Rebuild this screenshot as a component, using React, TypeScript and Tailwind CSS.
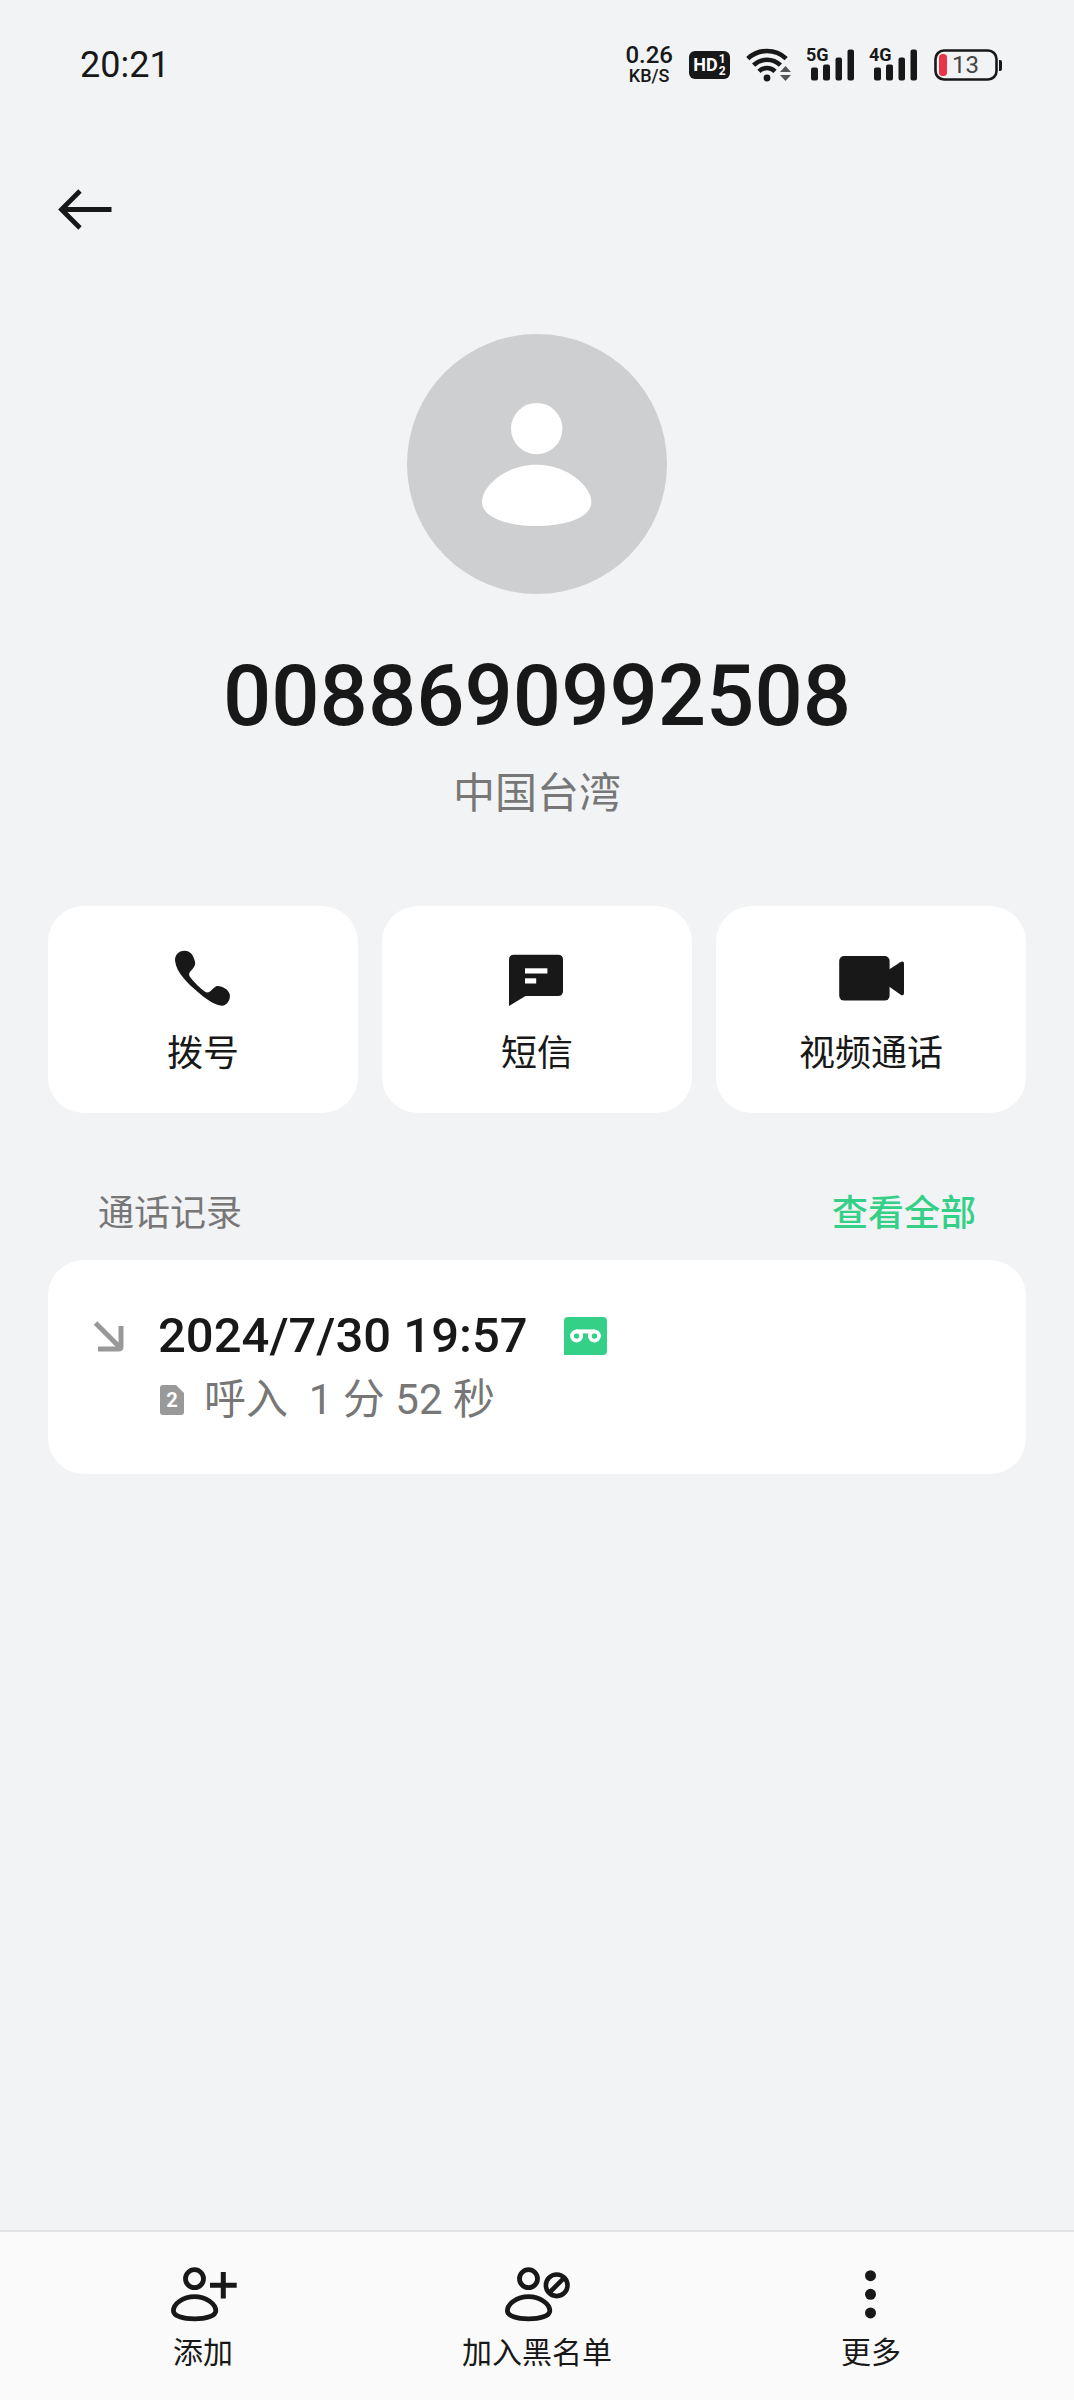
import type { ReactNode } from "react";

const PHONE_NUMBER = "0088690992508";

// Status bar icons

function HdIcon() {
  return (
    <div className="flex h-7 w-[41px] items-center justify-center gap-px rounded-md bg-[#181818] font-bold text-white">
      <span className="text-lg leading-7">HD</span>
      <span className="flex flex-col text-[12px] leading-[12px]">
        <span>1</span>
        <span>2</span>
      </span>
    </div>
  );
}

function WifiIcon() {
  return (
    <svg width="46" height="36" viewBox="0 0 46 36" fill="none" aria-hidden="true">
      <g stroke="#181818" strokeWidth="4.6">
        <path d="M1.8 11.6A28 28 0 0 1 40.2 11.6" />
        <path d="M7.6 18.2A19.2 19.2 0 0 1 34.4 18.2" />
        <path d="M13 24.4A11.2 11.2 0 0 1 29 24.4" />
      </g>
      <circle cx="21" cy="31" r="3.4" fill="#181818" />
      <path d="M34 25L39.5 19L45 25Z" fill="#555" />
      <path d="M34 28L39.5 34L45 28Z" fill="#555" />
    </svg>
  );
}

function SignalIcon({ label }: { label: string }) {
  return (
    <div className="relative h-9 w-[47px]">
      <svg width="47" height="36" viewBox="0 0 47 36" fill="#181818" aria-hidden="true">
        <rect x="3" y="20.5" width="7" height="13" rx="2" />
        <rect x="15" y="17.5" width="7" height="16" rx="2" />
        <rect x="27.5" y="10.5" width="6.5" height="23" rx="2" />
        <rect x="39.5" y="2.5" width="6.5" height="31" rx="2" />
      </svg>
      <span className="absolute -top-0.5 -left-0.5 text-lg leading-5 font-bold">{label}</span>
    </div>
  );
}

function BatteryIcon({ level }: { level: number }) {
  return (
    <div className="relative flex h-8 w-[68px] items-center">
      <svg className="absolute inset-0" width="68" height="32" viewBox="0 0 68 32" fill="none" aria-hidden="true">
        <rect x="1.5" y="1.5" width="61" height="29" rx="8.5" stroke="#181818" strokeWidth="2.6" />
        <rect x="5" y="5" width="8" height="22" rx="3.5" fill="#ea3447" />
        <path d="M65 11H66.2Q68 11 68 13V20Q68 22 66.2 22H65Z" fill="#181818" />
      </svg>
      <span className="pl-[18px] text-2xl leading-8 text-[#444]">{level}</span>
    </div>
  );
}

// Action icons

function PhoneIcon() {
  return (
    <svg width="72" height="72" viewBox="0 0 72 72" fill="#181818" aria-hidden="true">
      <path d="M17.5 8.7C11.5 8.7 7.5 13.4 8.1 19C8.8 25 12 30.5 16.1 35.5C20.5 41 25.5 45.5 30.8 50C37 55.2 45.5 62.5 54.5 63.8C60.5 64 64 56.5 62.6 52C61.5 47.5 55 43.7 50.5 44C46.5 44.3 44.5 50.4 40 50.4C37 50.4 25.5 38.5 22.7 34.5C20 29.5 27.8 27.5 28.2 21.5C28 18 26.5 15 25 12.5C23.5 10 20.5 8.7 17.5 8.7Z" />
    </svg>
  );
}

function MessageIcon() {
  return (
    <svg width="72" height="72" viewBox="0 0 72 72" fill="#181818" aria-hidden="true">
      <path d="M8 17.7Q8 12.7 13 12.7H57Q62 12.7 62 17.7V49Q62 54 57 54H24.5L8 64Z" />
      <rect x="24" y="26.3" width="22.4" height="5.2" fill="#fff" />
      <rect x="24" y="36.3" width="11.2" height="5.2" fill="#fff" />
    </svg>
  );
}

function VideoIcon() {
  return (
    <svg width="72" height="72" viewBox="0 0 72 72" fill="#181818" aria-hidden="true">
      <rect x="4.2" y="14" width="50.4" height="44.6" rx="5" />
      <path d="M54 27.6L65.3 20.2Q69 18.2 69 22V51Q69 54.6 65.3 52.4L54 44.6Z" />
    </svg>
  );
}

function Person() {
  return (
    <g stroke="#181818" strokeWidth="4.8" fill="none">
      <circle cx="27.5" cy="20.7" r="9" />
      <path d="M27.5 38.6C16 38.6 6.4 46 6.4 52.8C6.4 58 16 60.9 27.5 60.9C39 60.9 48.8 58 48.8 52.8C48.8 46 39 38.6 27.5 38.6Z" />
    </g>
  );
}

function AddIcon() {
  return (
    <svg width="72" height="72" viewBox="0 0 72 72" fill="none" aria-hidden="true">
      <Person />
      <path d="M43 27.3H69.7M56.3 14V40.5" stroke="#181818" strokeWidth="5" />
    </svg>
  );
}

function BlockIcon() {
  return (
    <svg width="72" height="72" viewBox="0 0 72 72" fill="none" aria-hidden="true">
      <Person />
      <g stroke="#181818" strokeWidth="4.6">
        <circle cx="55.7" cy="27.3" r="10.8" />
        <path d="M48 35L63.4 19.6" />
      </g>
    </svg>
  );
}

function MoreIcon() {
  return (
    <svg width="72" height="72" viewBox="0 0 72 72" fill="#181818" aria-hidden="true">
      <circle cx="35.5" cy="17.7" r="5.5" />
      <circle cx="35.5" cy="36.3" r="5.5" />
      <circle cx="35.5" cy="54.9" r="5.5" />
    </svg>
  );
}

interface Action {
  label: string;
  icon: ReactNode;
}

const actions: Action[] = [
  { label: "拨号", icon: <PhoneIcon /> },
  { label: "短信", icon: <MessageIcon /> },
  { label: "视频通话", icon: <VideoIcon /> },
];

const tools: Action[] = [
  { label: "添加", icon: <AddIcon /> },
  { label: "加入黑名单", icon: <BlockIcon /> },
  { label: "更多", icon: <MoreIcon /> },
];

function StatusBar() {
  return (
    <div className="flex h-32 items-center justify-between pt-0.5 pr-[72px] pl-20">
      <span className="text-4xl">20:21</span>
      <div className="flex items-center gap-4">
        <div className="flex flex-col items-center font-medium">
          <span className="text-2xl leading-[22px]">0.26</span>
          <span className="text-lg leading-5">KB/S</span>
        </div>
        <HdIcon />
        <WifiIcon />
        <SignalIcon label="5G" />
        <SignalIcon label="4G" />
        <BatteryIcon level={13} />
      </div>
    </div>
  );
}

export default function App() {
  return (
    <div className="flex min-h-screen flex-col bg-[#f2f3f5] font-['Roboto','Noto_Sans_CJK_SC',sans-serif] text-[#181818]">
      <StatusBar />

      {/* Back button */}
      <header className="flex h-40 items-center px-12">
        <button aria-label="返回">
          <svg width="72" height="72" viewBox="0 0 72 72" fill="none" stroke="#181818" strokeWidth="4.8" aria-hidden="true">
            <path d="M12.5 37.5H63.5M32 19L13.5 37.5L32 56" />
          </svg>
        </button>
      </header>

      {/* Caller */}
      <section className="flex flex-col items-center pt-[46px]">
        <svg width="260" height="260" viewBox="0 0 260 260" aria-hidden="true">
          <circle cx="130" cy="130" r="130" fill="#cecfd1" />
          <circle cx="129.7" cy="94.6" r="25.7" fill="#fff" />
          <path
            d="M129.7 130.7C99 130.7 75 152 75 168C75 183 99 192 129.7 192C160 192 184.3 183 184.3 168C184.3 152 160 130.7 129.7 130.7Z"
            fill="#fff"
          />
        </svg>
        <h1 className="mt-[50px] text-[85px] leading-[104px] font-medium">{PHONE_NUMBER}</h1>
        <p className="mt-3.5 text-[42px] leading-[64px] text-[#777]">中国台湾</p>
      </section>

      {/* Actions */}
      <section className="mt-20 grid grid-cols-3 gap-6 px-12">
        {actions.map((action) => (
          <button key={action.label} className="flex flex-col items-center gap-4 rounded-[36px] bg-white pt-9 pb-[35px]">
            {action.icon}
            <span className="text-4xl leading-[48px]">{action.label}</span>
          </button>
        ))}
      </section>

      {/* Call history */}
      <section className="px-12 pt-[77px]">
        <div className="flex items-center justify-between px-[50px] text-4xl leading-[48px]">
          <h2 className="text-[#777]">通话记录</h2>
          <a href="#all" className="font-medium text-[#35d088]">
            查看全部
          </a>
        </div>

        <div className="mt-[22px] flex gap-[34px] rounded-[36px] bg-white px-11 pt-11 pb-[42px]">
          <svg className="mt-4 shrink-0" width="32" height="32" viewBox="0 0 32 32" fill="none" aria-hidden="true">
            <path d="M3.5 3L28 27.5M6 29H26.5Q29 29 29 26.5V6" stroke="#999" strokeWidth="5" />
          </svg>
          <div>
            <div className="flex h-16 items-center gap-9">
              <span className="text-[49px] leading-[64px] font-medium">2024/7/30 19:57</span>
              <svg width="43" height="38" viewBox="0 0 43 38" fill="none" aria-hidden="true">
                <path d="M0 4Q0 0 4 0H39Q43 0 43 4V34Q43 38 39 38H0Z" fill="#35d088" />
                <path d="M12.5 14.4H30.5" stroke="#fff" strokeWidth="4" />
                <circle cx="12.6" cy="19" r="4.6" stroke="#fff" strokeWidth="3.8" />
                <circle cx="30.4" cy="19" r="4.6" stroke="#fff" strokeWidth="3.8" />
              </svg>
            </div>
            <div className="flex h-16 items-center gap-5 pl-0.5 text-[#777]">
              <div className="relative flex h-[30px] w-6 items-center justify-center">
                <svg className="absolute inset-0" width="24" height="30" viewBox="0 0 24 30" aria-hidden="true">
                  <path d="M0 3Q0 0 3 0H16L24 8V27Q24 30 21 30H3Q0 30 0 27Z" fill="#999" />
                </svg>
                <span className="relative text-xl leading-[30px] font-bold text-white">2</span>
              </div>
              <span className="text-[42px] leading-[64px] whitespace-pre">呼入  1 分 52 秒</span>
            </div>
          </div>
        </div>
      </section>

      {/* Bottom toolbar */}
      <nav className="mt-auto grid grid-cols-3 border-t-2 border-[#e1e3e6] bg-[#fafafa] px-9 pt-[26px] pb-[26px]">
        {tools.map((tool) => (
          <button key={tool.label} className="flex flex-col items-center gap-0.5">
            {tool.icon}
            <span className="text-3xl leading-[42px]">{tool.label}</span>
          </button>
        ))}
      </nav>
    </div>
  );
}
